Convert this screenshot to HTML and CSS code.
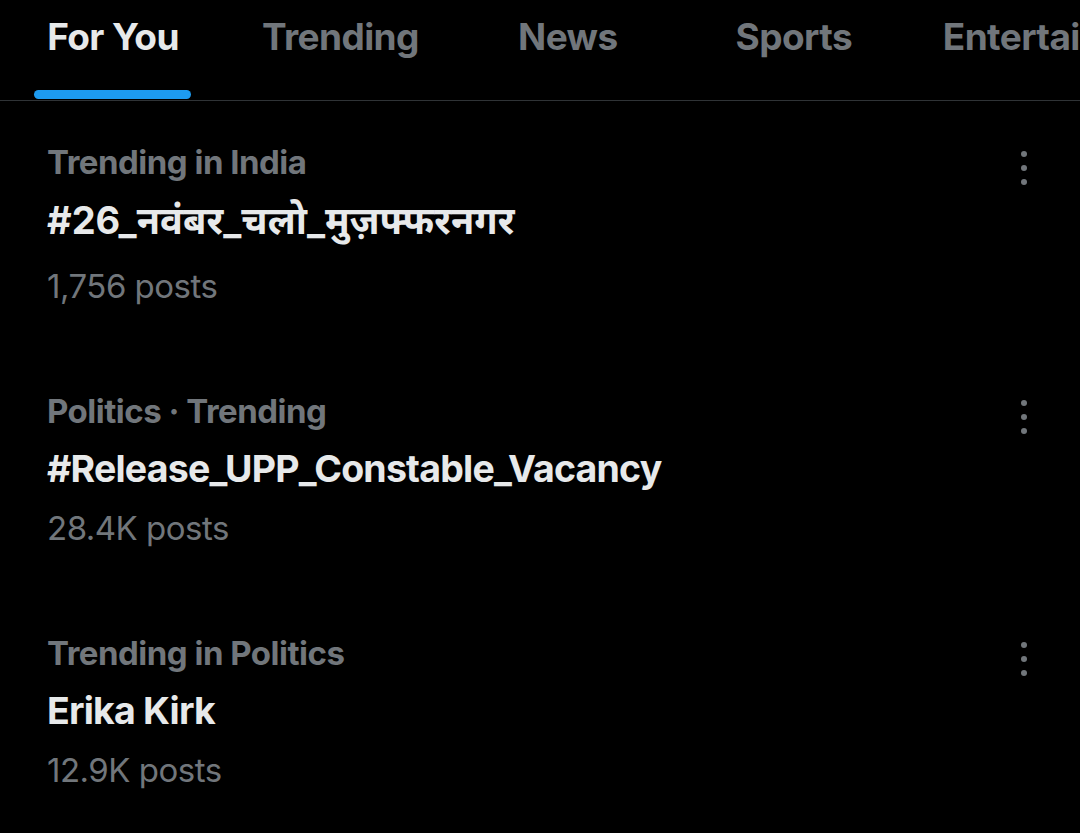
FILE: index.html
```html
<!DOCTYPE html>
<html lang="en">
<head>
<meta charset="utf-8">
<link rel="stylesheet" href="styles.css">
</head>
<body>
<div class="page">
  <nav class="tabs">
    <div class="tab active"><span class="tab-label">For You<span class="indicator"></span></span></div>
    <div class="tab"><span class="tab-label">Trending</span></div>
    <div class="tab"><span class="tab-label">News</span></div>
    <div class="tab"><span class="tab-label">Sports</span></div>
    <div class="tab"><span class="tab-label">Entertainment</span></div>
  </nav>
  <section class="list">
    <article class="trend">
      <div class="trend-body">
        <div class="meta">Trending in India</div>
        <div class="title hi">#26_नवंबर_चलो_मुज़फ्फरनगर</div>
        <div class="count">1,756 posts</div>
      </div>
      <div class="more"><span></span><span></span><span></span></div>
    </article>
    <article class="trend">
      <div class="trend-body">
        <div class="meta">Politics · Trending</div>
        <div class="title">#Release_UPP_Constable_Vacancy</div>
        <div class="count">28.4K posts</div>
      </div>
      <div class="more"><span></span><span></span><span></span></div>
    </article>
    <article class="trend">
      <div class="trend-body">
        <div class="meta">Trending in Politics</div>
        <div class="title">Erika Kirk</div>
        <div class="count">12.9K posts</div>
      </div>
      <div class="more"><span></span><span></span><span></span></div>
    </article>
  </section>
</div>
</body>
</html>
```
FILE: styles.css
```css
* { box-sizing: border-box; }
html, body { margin: 0; padding: 0; background: #000; }
body {
  font-family: Inter, "Noto Sans", "DejaVu Sans", sans-serif;
  color: #e7e9ea;
  width: 1080px;
  height: 833px;
  overflow: hidden;
}
.page { width: 1080px; height: 833px; overflow: hidden; }
.tabs {
  display: flex;
  height: 101px;
  border-bottom: 1px solid #2f3336;
  white-space: nowrap;
  overflow: hidden;
}
.tab {
  flex: 0 0 auto;
  min-width: 226px;
  padding: 0 36px;
  display: flex;
  justify-content: center;
}
.tab-label {
  position: relative;
  font-size: 37px;
  font-weight: 700;
  color: #71767b;
  padding-top: 14px;
  letter-spacing: -0.6px;
}
.tab.active .tab-label { color: #e7e9ea; }
.indicator {
  position: absolute;
  left: -13px;
  right: -12px;
  top: 90px;
  height: 9px;
  border-radius: 5px;
  background: #1d9bf0;
}
.list { padding-top: 38px; }
.trend {
  display: flex;
  padding: 0 0 0 47px;
  margin-bottom: 79px;
}
.trend-body { flex: 1; }
.meta {
  font-size: 33px;
  font-weight: 700;
  color: #71767b;
  line-height: 46px;
  letter-spacing: -0.5px;
}
.title {
  font-size: 37.5px;
  font-weight: 700;
  color: #e7e9ea;
  line-height: 64px;
  letter-spacing: -0.8px;
  margin-top: 3px;
}
.title.hi {
  font-size: 38px;
  letter-spacing: 0;
  padding-bottom: 7px;
}
.count {
  font-size: 33px;
  font-weight: 400;
  color: #71767b;
  line-height: 46px;
  letter-spacing: -0.5px;
  margin-top: 4px;
}
.more {
  width: 56px;
  margin-right: 28px;
  display: flex;
  flex-direction: column;
  align-items: center;
  gap: 8px;
  padding-top: 12px;
}
.more span {
  width: 6px;
  height: 6px;
  border-radius: 50%;
  background: #71767b;
}
```
